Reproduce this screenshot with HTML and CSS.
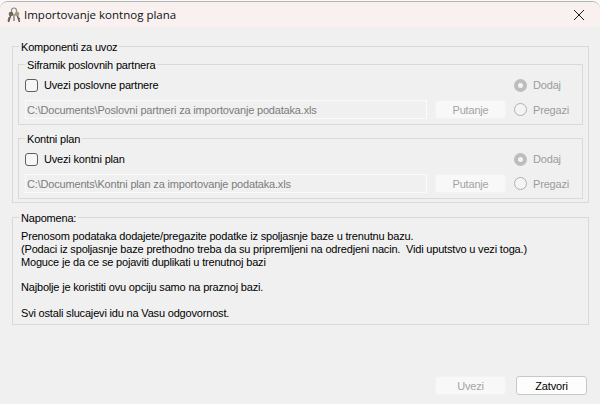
FILE: index.html
```html
<!DOCTYPE html>
<html lang="sr">
<head>
<meta charset="utf-8">
<title>Importovanje kontnog plana</title>
<link rel="stylesheet" href="styles.css">
</head>
<body>
<div class="window">
  <header class="titlebar">
    <svg class="app-icon" width="18" height="18" viewBox="0 0 18 18">
      <path d="M6.500 7V4.500a2.500 2.500 0 0 1 5 0V7" fill="none" stroke="#8a8a86" stroke-width="1.200"/>
      <circle cx="6" cy="8" r="2.300" fill="#6f6656"/>
      <circle cx="12" cy="8" r="2.300" fill="#a59a80"/>
      <path d="M5.500 10 3.500 16M5 12.500l-1.800-.5M4.300 14.500l-1.600-.5M12.500 10l2 6M13.200 13l1.800-.6" fill="none" stroke="#5f5a4c" stroke-width="1.500"/>
      <path d="M9 8v7" fill="none" stroke="#8b8470" stroke-width="1.500"/>
    </svg>
    <span class="title">Importovanje kontnog plana</span>
    <svg class="close" width="12" height="12" viewBox="0 0 12 12">
      <path d="M1 1l10 10M11 1 1 11" fill="none" stroke="#1a1a1a" stroke-width="1"/>
    </svg>
  </header>
  <main class="content">
    <fieldset class="group">
      <legend>Komponenti za uvoz</legend>
      <fieldset class="group sub">
        <legend>Siframik poslovnih partnera</legend>
        <div class="import-grid">
          <label class="check"><span class="box"></span>Uvezi poslovne partnere</label>
          <label class="radio off"><span class="dot on"></span>Dodaj</label>
          <div class="path">C:\Documents\Poslovni partneri za importovanje podataka.xls</div>
          <button class="btn" disabled>Putanje</button>
          <label class="radio off"><span class="dot"></span>Pregazi</label>
        </div>
      </fieldset>
      <fieldset class="group sub second">
        <legend>Kontni plan</legend>
        <div class="import-grid">
          <label class="check"><span class="box"></span>Uvezi kontni plan</label>
          <label class="radio off"><span class="dot on"></span>Dodaj</label>
          <div class="path">C:\Documents\Kontni plan za importovanje podataka.xls</div>
          <button class="btn" disabled>Putanje</button>
          <label class="radio off"><span class="dot"></span>Pregazi</label>
        </div>
      </fieldset>
    </fieldset>
    <fieldset class="group note">
      <legend>Napomena:</legend>
      <p>Prenosom podataka dodajete/pregazite podatke iz spoljasnje baze u trenutnu bazu.</p>
      <p>(Podaci iz spoljasnje baze prethodno treba da su pripremljeni na odredjeni nacin.&nbsp; Vidi uputstvo u vezi toga.)</p>
      <p>Moguce je da ce se pojaviti duplikati u trenutnoj bazi</p>
      <p class="gap first-gap">Najbolje je koristiti ovu opciju samo na praznoj bazi.</p>
      <p class="gap">Svi ostali slucajevi idu na Vasu odgovornost.</p>
    </fieldset>
  </main>
  <footer class="actions">
    <button class="btn" disabled>Uvezi</button>
    <button class="btn primary">Zatvori</button>
  </footer>
</div>
</body>
</html>
```
FILE: styles.css
```css
* { box-sizing: border-box; }
html, body { margin: 0; height: 100%; background: #fafafa; overflow: hidden; }
body { font: 11px/14px "Liberation Sans", Arial, sans-serif; letter-spacing: -0.18px; color: #000; }
.window {
  height: 404px;
  margin-top: 1px;
  background: #f0f0f0;
  border-top: 1px solid #b4b4b4;
  border-radius: 8px 8px 0 0;
  display: flex;
  flex-direction: column;
  overflow: hidden;
}
.titlebar {
  height: 25px;
  flex: none;
  background: #f9f0f0;
  display: flex;
  align-items: center;
  padding: 0 15px 0 5px;
}
.app-icon { flex: none; }
.title { margin-left: 1px; font: 11.5px/16px "Open Sans", sans-serif; letter-spacing: 0; color: #111; flex: 1; }
.close { flex: none; }
.content { padding: 12px 11px 0 12px; flex: 1; }
.group {
  margin: 0;
  min-width: 0;
  border: 1px solid #d9d9d9;
  padding: 4px 5px 3px;
}
.group legend { padding: 0 2px; margin-left: 1px; height: 14px; line-height: 16px; }
.group > .group legend { margin-left: 0; }
.sub { padding: 7px 6px 5px; }
.second { margin-top: 6px; }
.import-grid {
  display: grid;
  grid-template-columns: 402px 71px 1fr;
  grid-template-rows: 14px 19px;
  column-gap: 8px;
  row-gap: 8px;
  align-items: center;
}
.check { display: flex; align-items: center; gap: 6px; grid-column: 1 / 3; }
.box {
  width: 13px; height: 13px;
  border: 1px solid #5f5f5f;
  border-radius: 3px;
  background: #f6f6f6;
}
.radio { display: flex; align-items: center; gap: 6px; color: #9c9c9c; }
.dot {
  width: 13px; height: 13px;
  border: 1px solid #b0b0b0;
  border-radius: 50%;
  background: #f4f4f4;
}
.dot.on { border: 4px solid #bdbdbd; background: #f4f4f4; }
.path {
  height: 19px;
  background: #f0f0f0;
  border: 1px solid #fbfbfb;
  color: #7c7c7c;
  padding: 2px 1px;
  white-space: nowrap;
  overflow: hidden;
}
.btn {
  width: 71px; height: 19px;
  padding: 0;
  font: inherit;
  letter-spacing: inherit;
  border: 1px solid #f3f3f3;
  border-radius: 3px;
  background: #f8f8f8;
  color: #a3a3a3;
}
.primary { background: #fdfdfd; border-color: #c8c8c8; color: #000; }
.note { margin-top: 7px; padding: 6px 8px 5px; height: 115px; }
.note legend { margin-left: -2px; }
.note p { margin: 0; height: 13px; line-height: 13px; white-space: nowrap; }
.note p.gap { margin-top: 13px; }
.note p.first-gap { margin-top: 12px; }
.actions {
  flex: none;
  display: flex;
  justify-content: flex-end;
  gap: 10px;
  padding: 0 13px 10px 0;
}
```
